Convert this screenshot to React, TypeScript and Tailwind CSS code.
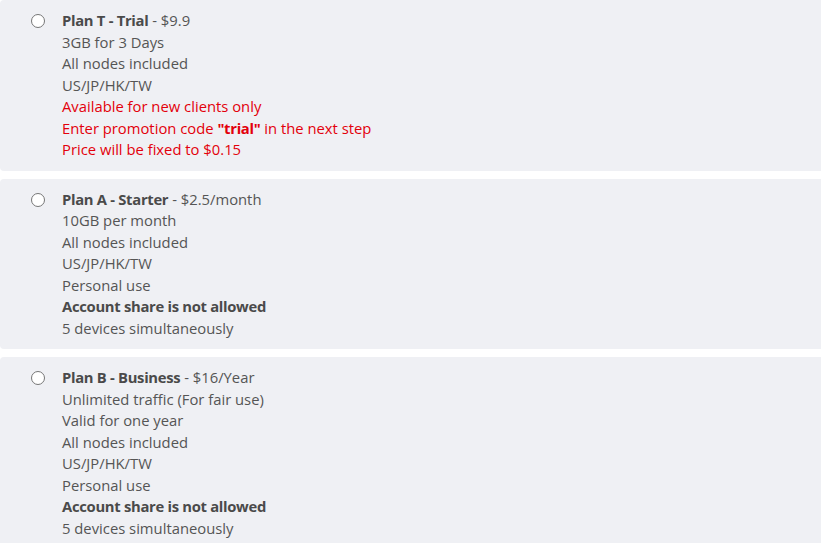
import React from "react";

type Plan = {
  name: string;
  price: string;
  lines: { text: React.ReactNode; red?: boolean; bold?: boolean }[];
};

const plans: Plan[] = [
  {
    name: "Plan T - Trial",
    price: "$9.9",
    lines: [
      { text: "3GB for 3 Days" },
      { text: "All nodes included" },
      { text: "US/JP/HK/TW" },
      { text: "Available for new clients only", red: true },
      {
        text: (
          <>
            Enter promotion code <b className="font-bold tracking-[-0.3px]">"trial"</b> in the next step
          </>
        ),
        red: true,
      },
      { text: "Price will be fixed to $0.15", red: true },
    ],
  },
  {
    name: "Plan A - Starter",
    price: "$2.5/month",
    lines: [
      { text: "10GB per month" },
      { text: "All nodes included" },
      { text: "US/JP/HK/TW" },
      { text: "Personal use" },
      { text: "Account share is not allowed", bold: true },
      { text: "5 devices simultaneously" },
    ],
  },
  {
    name: "Plan B - Business",
    price: "$16/Year",
    lines: [
      { text: "Unlimited traffic (For fair use)" },
      { text: "Valid for one year" },
      { text: "All nodes included" },
      { text: "US/JP/HK/TW" },
      { text: "Personal use" },
      { text: "Account share is not allowed", bold: true },
      { text: "5 devices simultaneously" },
    ],
  },
];

function PlanCard({ plan }: { plan: Plan }) {
  return (
    <label className="flex rounded-[4px] bg-[#eff0f4] pt-[10px] pb-[10px] mr-[-8px]">
      <div className="w-[62px] shrink-0 flex justify-end pr-[17px] pt-[4px]">
        <span className="block w-[14px] h-[14px] rounded-full border border-[#767676] bg-white" />
      </div>
      <div className="flex flex-col text-[14.8px] leading-[21.5px] text-[#555]">
        <div>
          <span className="font-bold tracking-[-0.3px] text-[#4a4a4a]">{plan.name}</span> - {plan.price}
        </div>
        {plan.lines.map((l, i) => (
          <div
            key={i}
            className={
              l.red ? "text-[#e3000b]" : l.bold ? "font-bold tracking-[-0.3px] text-[#4a4a4a]" : ""
            }
          >
            {l.text}
          </div>
        ))}
      </div>
    </label>
  );
}

export default function App() {
  return (
    <div className="w-[821px] h-[543px] overflow-hidden bg-white font-['Open_Sans',sans-serif]">
      <div className="flex flex-col gap-[8px]">
        {plans.map((p) => (
          <PlanCard key={p.name} plan={p} />
        ))}
      </div>
    </div>
  );
}
